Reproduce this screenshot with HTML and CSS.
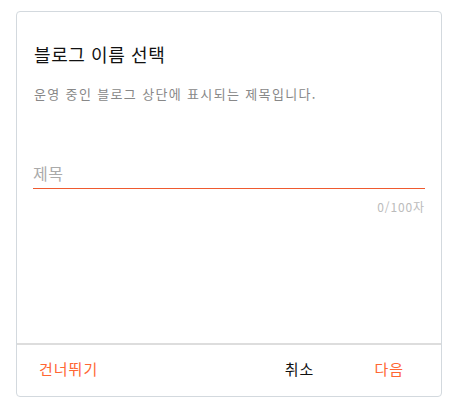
FILE: index.html
```html
<!DOCTYPE html>
<html lang="ko">
<head>
<meta charset="utf-8">
<link rel="stylesheet" href="styles.css">
</head>
<body>
<div class="dialog">
  <div class="dialog-body">
    <h1 class="title">블로그 이름 선택</h1>
    <p class="desc">운영 중인 블로그 상단에 표시되는 제목입니다.</p>
    <div class="field">
      <input class="field-input" type="text" placeholder="제목">
      <div class="counter">0/100자</div>
    </div>
  </div>
  <div class="dialog-footer">
    <button class="btn btn-accent">건너뛰기</button>
    <div class="footer-right">
      <button class="btn btn-plain">취소</button>
      <button class="btn btn-accent">다음</button>
    </div>
  </div>
</div>
</body>
</html>
```
FILE: styles.css
```css
* { box-sizing: border-box; }
html, body { margin: 0; padding: 0; background: #fff; }
body {
  font-family: "Noto Sans CJK KR", "Noto Sans", sans-serif;
  padding: 11px 20px 0 16px;
}
.dialog {
  width: 426px;
  height: 386px;
  border: 1px solid #d3d9de;
  border-radius: 4px;
  display: flex;
  flex-direction: column;
}
.dialog-body {
  flex: 1;
  padding: 29px 16px 0 16px;
}
.title {
  margin: 0 0 0 1px;
  font-size: 18px;
  font-weight: 400;
  line-height: 26px;
  letter-spacing: 0.6px;
  color: #111;
}
.desc {
  margin: 18px 0 0 1px;
  font-size: 13px;
  line-height: 18px;
  letter-spacing: 1.35px;
  color: #888;
}
.field { margin-top: 58px; }
.field-input {
  display: block;
  width: 100%;
  border: 0;
  border-bottom: 1px solid #ef5a2f;
  padding: 0 0 3px 0;
  font-family: inherit;
  font-size: 16px;
  line-height: 24px;
  letter-spacing: 0.6px;
  color: #111;
  outline: none;
  background: transparent;
}
.field-input::placeholder { color: #aaa; }
.counter {
  margin-top: 10px;
  text-align: right;
  font-size: 12px;
  line-height: 16px;
  letter-spacing: 0.9px;
  color: #bbb;
}
.dialog-footer {
  border-top: 2px solid #dddddd;
  height: 53px;
  display: flex;
  align-items: center;
  justify-content: space-between;
  padding: 0 37px 4px 22px;
}
.footer-right { display: flex; gap: 60px; align-items: center; }
.btn {
  border: 0;
  background: none;
  padding: 0;
  font-family: inherit;
  font-size: 15px;
  line-height: 20px;
  letter-spacing: 1px;
  cursor: pointer;
}
.btn-accent { color: #ff6633; }
.btn-plain { color: #111; }
```
